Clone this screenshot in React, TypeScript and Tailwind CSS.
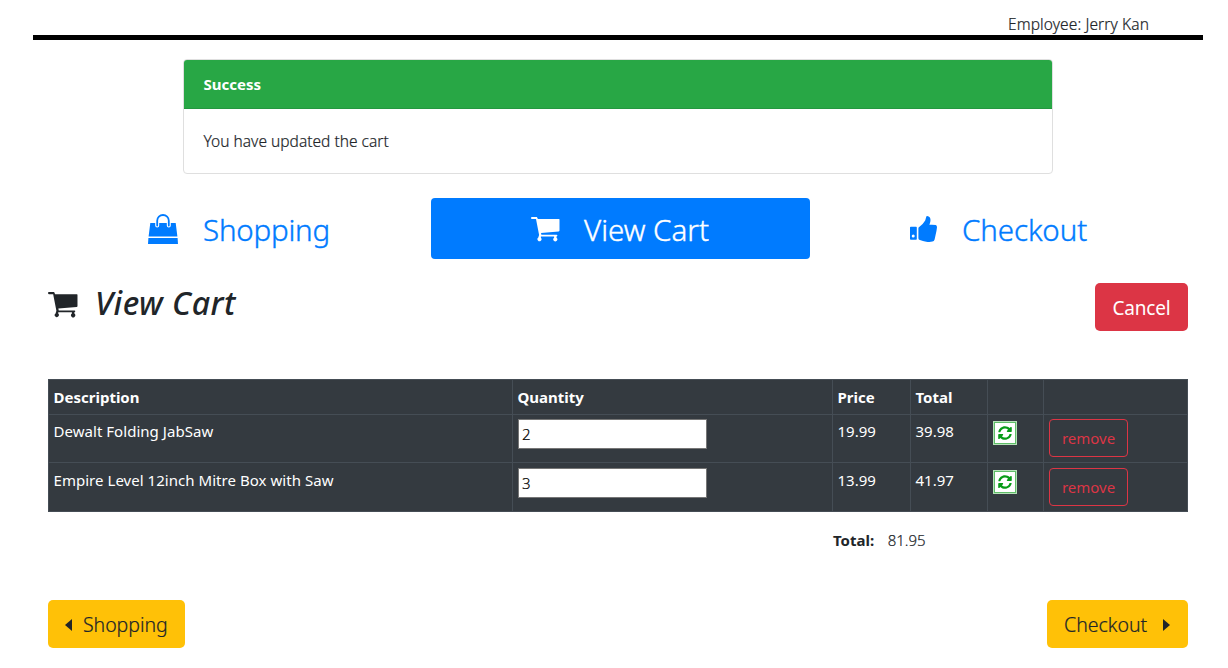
import type { ReactNode } from "react";
import { FaSyncAlt } from "react-icons/fa";

function BagIcon() {
  return (
    <svg viewBox="0 0 30 30" className="h-[30px] w-[30px] shrink-0" fill="none">
      <path d="M2.3 9h25.4l1.7 13.6H.6zM.4 24.1h29.2L30 30H0z" fill="currentColor" />
      <path d="M9.2 11.600V6.800a5.800 5.800 0 0 1 11.600 0v4.800" stroke="#fff" strokeWidth="4" strokeLinecap="round" />
      <path d="M9.200 11.600V6.800a5.800 5.800 0 0 1 11.600 0v4.800" stroke="currentColor" strokeWidth="1.8" strokeLinecap="round" />
    </svg>
  );
}

function CartIcon({ className }: { className: string }) {
  return (
    <svg viewBox="0 0 29 25" className={"shrink-0 " + className} fill="currentColor">
      <path d="M.9 0h5l1 2H28q.5 0 .5.600v10.900q0 .8-.8.9L10 16l.4 1.800h15.200q.8 0 .8.800t-.8.800h-.1v1.400a2 2 0 1 1-2.400 0v-1.400H9.900v1.400a2 2 0 1 1-2.600-.2l.8-2.600L5 2H.9Q0 2 0 1t.9-1z" />
    </svg>
  );
}

function ThumbIcon() {
  return (
    <svg viewBox="0 0 27 26" className="h-[26px] w-[27px] shrink-0" fill="currentColor">
      <path fillRule="evenodd" d="M.8 10.8h5.300q.7 0 .7.700v11.400q0 .8-.7.800H.8q-.8 0-.8-.8V11.500q0-.7.8-.7zm2.400 7.700a1.500 1.500 0 1 0 0 3 1.500 1.500 0 0 0 0-3z" />
      <path d="M8.400 12.300q0-.9.8-1.400 4.500-3.500 6-6.400l1-3.500Q16.200 0 17.200 0q3.300.5 3.300 4 0 2.500-1.100 4.800 3.800-.3 6.300.3Q27 9.600 27 11.200l-.5 3.600-1.900 8.800q-.5 1.800-2.200 2-2.400.5-6.200.1-3.300-.4-6.300-1.600-1.500-.6-1.500-1.900z" />
    </svg>
  );
}

function NavTab({ active, icon, children }: { active?: boolean; icon: ReactNode; children: ReactNode }) {
  return (
    <a
      className={
        "flex h-[61px] items-center rounded text-[29.5px] font-light [-webkit-text-stroke:0.4px_currentColor] " +
        (active ? "bg-[#007bff] text-white" : "text-[#007bff]")
      }
    >
      {icon}
      {children}
    </a>
  );
}

const items = [
  { name: "Dewalt Folding JabSaw", qty: 2, price: "19.99", total: "39.98", height: "h-[48px]", text: "pt-1", control: "pt-1", icon: "pt-[6px]" },
  { name: "Empire Level 12inch Mitre Box with Saw", qty: 3, price: "13.99", total: "41.97", height: "h-[49px]", text: "pt-[5px]", control: "pt-[5px]", icon: "pt-[7px]" },
];

const columns = "grid grid-cols-[464px_320px_78px_77px_56px_144px]";
const cell = "border-t border-l border-[#454d55] ";
const textCell = cell + "pl-[4.5px] ";
const thin = "[-webkit-text-stroke:0.2px_currentColor]";

export default function App() {
  return (
    <div className="h-[668px] w-[1228px] overflow-hidden bg-white font-['Noto_Sans',sans-serif] text-[15px] leading-6 font-light text-[#212529]">
      <header className="mr-[25px] ml-[33px] flex h-10 items-start justify-end border-b-[5px] border-black pt-3 pr-[54px]">
        <span className={"text-[15.5px] tracking-[0.1px] " + thin}>Employee: Jerry Kan</span>
      </header>

      <section className="mt-[19px] ml-[183px] h-[115px] w-[870px] overflow-hidden rounded border border-[#dfdfdf]">
        <div className="flex h-[49px] items-center border-b border-[#249740] bg-[#28a745] px-[19.5px] font-bold text-white">Success</div>
        <p className={"px-[19.5px] pt-5 text-[15.5px] tracking-[0.02px] " + thin}>You have updated the cart</p>
      </section>

      <main className="mr-10 ml-12 w-[1140px]">
        <nav className="mt-6 grid grid-cols-[383px_379px_378px]">
          <NavTab icon={<span className="mr-[25px] ml-[100px]"><BagIcon /></span>}>
            <span className="pt-[2px] tracking-[-0.2px]">Shopping</span>
          </NavTab>
          <NavTab active icon={<span className="mr-6 ml-[100px] pt-[2px]"><CartIcon className="h-[25px] w-[29px]" /></span>}>
            <span className="pt-[2px]">View Cart</span>
          </NavTab>
          <NavTab icon={<span className="mr-[25px] ml-[100px]"><ThumbIcon /></span>}>
            <span className="pt-[2px] tracking-[-0.1px]">Checkout</span>
          </NavTab>
        </nav>

        <div className="mt-6 flex h-24 items-start justify-between">
          <h1 className="flex h-10 items-center text-[32px] font-medium tracking-[0.5px] italic">
            <CartIcon className="mt-1 mr-[17px] h-[26px] w-[30px]" />
            View Cart
          </h1>
          <button className="h-12 w-[93px] rounded-[5px] bg-[#dc3545] pt-[2px] text-[19px] font-normal tracking-[-0.2px] text-white">Cancel</button>
        </div>

        <div className="h-[133px] border-r border-b border-[#454d55] bg-[#343a40] font-normal text-white">
          <div className={columns + " h-[35px] font-bold"}>
            {["Description", "Quantity", "Price", "Total", "", ""].map((h, i) => (
              <div key={i} className={textCell + "pt-[5px]"}>{h}</div>
            ))}
          </div>
          {items.map((item) => (
            <div key={item.name} className={columns + " " + item.height}>
              <div className={textCell + "tracking-[0.04px] " + item.text}>{item.name}</div>
              <div className={cell + "pl-[5px] " + item.control}>
                <input
                  defaultValue={item.qty}
                  className="block h-[30px] w-[189px] border border-[#767676] bg-white px-[3px] text-[15px] font-light text-black [-webkit-text-stroke:0.2px_currentColor]"
                />
              </div>
              <div className={textCell + item.text}>{item.price}</div>
              <div className={textCell + item.text}>{item.total}</div>
              <div className={cell + "pl-[5px] " + item.icon}>
                <button className="flex h-6 w-6 items-center justify-center border border-[#b5e2b8] bg-white p-0 outline-1 -outline-offset-2 outline-[#5fbd68]">
                  <FaSyncAlt size={14} color="#079b17" />
                </button>
              </div>
              <div className={cell + "pl-[5px] " + item.control}>
                <button className="h-[38px] w-[79px] rounded border border-[#dc3545] text-[#dc3545]">remove</button>
              </div>
            </div>
          ))}
        </div>

        <div className="mt-4 ml-[785px] flex gap-[13.5px]">
          <b className="font-bold">Total:</b>
          <span className={thin}>81.95</span>
        </div>

        <footer className="mt-12 flex justify-between text-[19.5px] [-webkit-text-stroke:0.2px_currentColor]">
          <button className="flex h-12 w-[137px] items-center rounded-[5px] bg-[#ffc107] pl-[17px]">
            <svg viewBox="0 0 7 12" className="mt-px mr-[11px] h-3 w-[7px]" fill="currentColor"><path d="M7 0v12L0 6z" /></svg>
            <span className="pt-[2px] tracking-[-0.05px]">Shopping</span>
          </button>
          <button className="flex h-12 w-[141px] items-center rounded-[5px] bg-[#ffc107] pl-[17px]">
            <span className="pt-[2px]">Checkout</span>
            <svg viewBox="0 0 7 12" className="mt-px ml-4 h-3 w-[7px]" fill="currentColor"><path d="M0 0v12l7-6z" /></svg>
          </button>
        </footer>
      </main>
    </div>
  );
}
